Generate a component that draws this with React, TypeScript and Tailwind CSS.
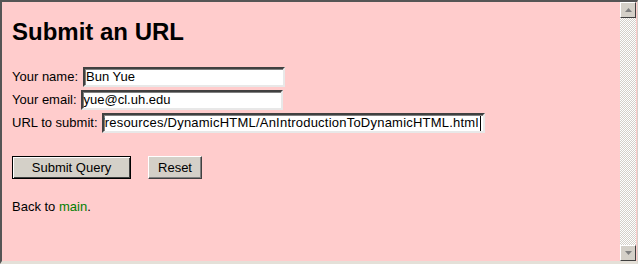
import React from "react";

const inset =
  "border-2 border-t-[#404040] border-l-[#404040] border-b-[#e8e8e8] border-r-[#e8e8e8] bg-white shadow-[inset_1px_1px_0_#808080]";

function ScrollButton({ up }: { up: boolean }) {
  return (
    <div className="w-[16px] h-[16px] bg-[#d4d0c8] border border-t-white border-l-white border-b-[#404040] border-r-[#404040] flex items-center justify-center">
      <svg width="7" height="4" viewBox="0 0 7 4">
        {up ? (
          <polygon points="3.5,0 7,4 0,4" fill="#808080" />
        ) : (
          <polygon points="0,0 7,0 3.5,4" fill="#808080" />
        )}
      </svg>
    </div>
  );
}

export default function App() {
  return (
    <div
      className="w-[638px] h-[264px] bg-[#ffcccc] border-t-2 border-l-2 border-r border-b-[3px] border-t-[#555555] border-l-[#555555] border-r-[#d4d0c8] border-b-[#e4e0d8] flex flex-row overflow-hidden"
      style={{ fontFamily: '"Liberation Sans", Arial, sans-serif' }}
    >
      <div className="flex-1 pl-[10px] pt-[16px] text-black">
        <h1 className="text-[24px] leading-[28px] font-bold m-0">Submit an URL</h1>
        <div className="mt-[21px] flex flex-col gap-[3px] text-[13px]">
          <div className="flex items-center h-[20px]">
            <span className="mr-[5px]">Your name:</span>
            <div className={`${inset} w-[202px] h-[20px] flex items-center px-[1px] text-[13px]`}>Bun Yue</div>
          </div>
          <div className="flex items-center h-[20px]">
            <span className="mr-[4px]">Your email:</span>
            <div className={`${inset} w-[202px] h-[20px] flex items-center px-[1px] text-[13px]`}>yue@cl.uh.edu</div>
          </div>
          <div className="flex items-center h-[20px]">
            <span className="mr-[4px]">URL to submit:</span>
            <div className={`${inset} w-[383px] h-[20px] flex items-center justify-end overflow-hidden whitespace-nowrap text-[13px] tracking-[0.22px]`}>
              <span className="shrink-0">/resources/DynamicHTML/AnIntroductionToDynamicHTML.html</span>
              <span className="inline-block w-[1px] h-[15px] bg-black ml-[1px] mr-[2px] shrink-0" />
            </div>
          </div>
        </div>
        <div className="mt-[23px] flex flex-row gap-[17px] text-[13px]">
          <button className="w-[119px] h-[23px] bg-[#d4d0c8] border border-black shadow-[inset_1px_1px_0_#fff,inset_-1px_-1px_0_#404040] flex items-center justify-center">
            Submit Query
          </button>
          <button className="w-[54px] h-[23px] bg-[#d4d0c8] border border-t-white border-l-white border-b-[#404040] border-r-[#404040] shadow-[inset_-1px_-1px_0_#808080] flex items-center justify-center">
            Reset
          </button>
        </div>
        <p className="mt-[20px] text-[13px] leading-[16px]">
          Back to <a className="text-[#008000]">main</a>.
        </p>
      </div>
      <div className="w-[16px] mr-[1px] flex flex-col">
        <ScrollButton up />
        <div className="flex-1 bg-[repeating-conic-gradient(#d4d0c8_0_25%,#ffffff_0_50%)] bg-[length:2px_2px]" />
        <ScrollButton up={false} />
      </div>
    </div>
  );
}
